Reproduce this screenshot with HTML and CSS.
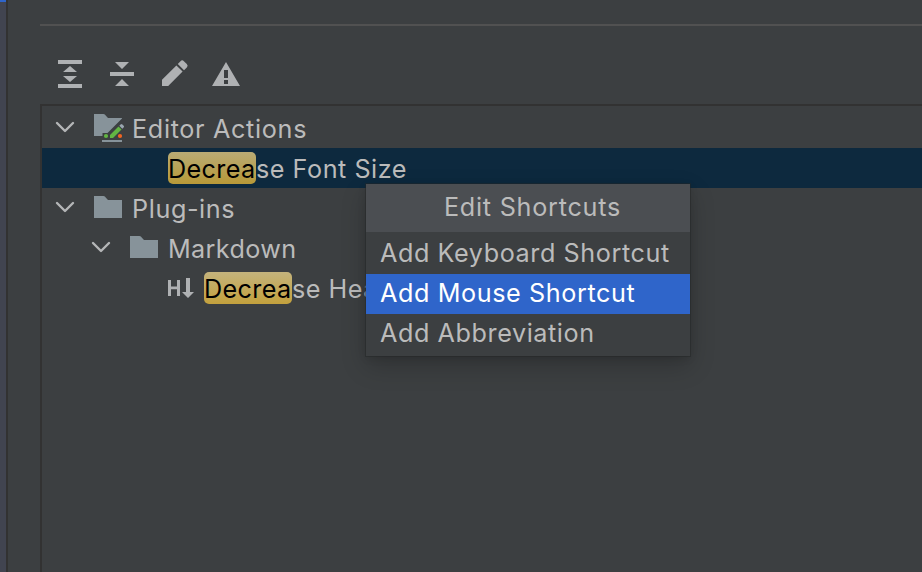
FILE: index.html
```html
<!DOCTYPE html>
<html lang="en">
<head>
<meta charset="utf-8">
<title>Keymap</title>
<link rel="stylesheet" href="styles.css">
</head>
<body>
<div class="window">
  <aside class="sidebar"><div class="sidebar-selection"></div></aside>
  <main class="content">
    <hr class="separator">
    <div class="toolbar">
      <svg class="tool" viewBox="0 0 32 32"><path d="M4 2h24v4H4zM4 26h24v4H4zM16 8l7 6H9zM9 18h14l-7 6z"/></svg>
      <svg class="tool" viewBox="0 0 32 32"><path d="M4 14h24v4H4zM9 4h14l-7 7zM16 21l7 7H9z"/></svg>
      <svg class="tool" viewBox="0 0 32 32"><path d="M4 28v-6.2L18.4 7.4l6.2 6.2L10.2 28zM19.8 6l2.7-2.8q1.7-1.7 3.4 0l2.9 2.9q1.7 1.7 0 3.4L26 12.2z"/></svg>
      <svg class="tool" viewBox="0 0 32 32"><path fill-rule="evenodd" d="M16 4l14 24H2zM14 12v8h4v-8zM14 22v4h4v-4z"/></svg>
    </div>
    <div class="tree">
      <div class="row">
        <svg class="chevron" viewBox="0 0 20 12"><path d="M2 2l8 8 8-8"/></svg>
        <svg class="node-icon" viewBox="0 0 32 32"><path class="folder" d="M2 4h9.5q1.5.2 2.6 2L16 8h14v.5L15.5 23h-5v3H2z"/><path class="folder" d="M10 30h20v2H10z"/><path class="green" d="M18 28v-3l8.5-8.5 3 3L21 28z"/><path class="eraser" d="M27.3 15.7l1.4-1.3q.8-.7 1.6 0l1.4 1.3q.7.8 0 1.6l-1.4 1.4z"/><circle class="green" cx="14" cy="26" r="2.1"/><circle class="orange" cx="28" cy="26" r="2.1"/></svg>
        <span class="label l-editor">Editor Actions</span>
      </div>
      <div class="row selected leaf-one">
        <span class="label"><mark>Decrea</mark><span class="l-font">se Font Size</span></span>
      </div>
      <div class="row">
        <svg class="chevron" viewBox="0 0 20 12"><path d="M2 2l8 8 8-8"/></svg>
        <svg class="node-icon" viewBox="0 0 32 32"><path class="folder" d="M2 6h9.5q1.5.2 2.6 2L16 10h14v18H2z"/></svg>
        <span class="label l-plug">Plug-ins</span>
      </div>
      <div class="row level-two">
        <svg class="chevron" viewBox="0 0 20 12"><path d="M2 2l8 8 8-8"/></svg>
        <svg class="node-icon" viewBox="0 0 32 32"><path class="folder" d="M2 6h9.5q1.5.2 2.6 2L16 10h14v18H2z"/></svg>
        <span class="label l-mark">Markdown</span>
      </div>
      <div class="row leaf-two">
        <svg class="node-icon heading" viewBox="0 0 32 32"><path d="M4 8h3v6.4h6V8h3v16h-3v-6.8H7V24H4zM22 6h4v14h4l-6 6-6-6h4z"/></svg>
        <span class="label"><mark>Decrea</mark><span class="l-font">se Hea</span></span>
      </div>
    </div>
  </main>
  <div class="popup">
    <div class="popup-title"><span class="l-title">Edit Shortcuts</span></div>
    <div class="popup-list">
      <div class="item"><span class="l-key">Add Keyboard Shortcut</span></div>
      <div class="item active"><span class="l-mouse">Add Mouse Shortcut</span></div>
      <div class="item"><span class="l-abbr">Add Abbreviation</span></div>
    </div>
  </div>
</div>
</body>
</html>
```
FILE: styles.css
```css
* { box-sizing: border-box; }
body {
  margin: 0;
  background: #3c3f41;
  color: #bbbbbb;
  font: 25.2px/40px Inter, sans-serif;
  letter-spacing: .35px;
  overflow: hidden;
}
.window { position: relative; display: flex; width: 922px; height: 572px; }
.sidebar { width: 8px; background: #414450; border-right: 2px solid #323232; }
.sidebar-selection { height: 2px; background: #2f65ca; }
.content { flex: 1; display: flex; flex-direction: column; padding: 24px 0 0 32px; min-width: 0; }
.separator { width: 100%; height: 2px; margin: 0; border: 0; background: #515151; }
.toolbar { display: flex; gap: 20px; padding: 32px 0 14px 14px; }
.tool { width: 32px; height: 32px; fill: #afb1b3; }
.tree { flex: 1; border: solid #323232; border-width: 2px 0 0 2px; padding-top: 2px; }
.row { display: flex; height: 40px; padding-left: 13px; white-space: nowrap; }
.row.level-two { padding-left: 49px; }
.row.leaf-one { padding-left: 126px; }
.row.leaf-two { padding-left: 122px; }
.selected { background: #0d293e; }
.chevron { width: 20px; height: 12px; margin: 12.7px 17px 0 0; fill: none; stroke: #b4b6b7; stroke-width: 2.4; stroke-linecap: round; stroke-linejoin: round; }
.node-icon { width: 32px; height: 32px; margin: 2px 8px 0 0; }
.node-icon.heading { margin: 4px 8px 0 0; fill: #afb1b3; }
.folder { fill: #87939a; }
.green { fill: #62b543; }
.orange { fill: #f26522; }
.eraser { fill: #9aa7b0; }
.label { display: flex; line-height: 42px; }
.l-editor { letter-spacing: .67px; }
.l-font { letter-spacing: .52px; }
.l-plug { letter-spacing: .6px; }
.l-title { letter-spacing: .75px; }
.l-key { letter-spacing: .57px; }
.l-mouse { letter-spacing: .59px; }
.l-abbr { letter-spacing: .57px; }
mark {
  width: 88px; height: 32px; margin-top: 4px; line-height: 34px;
  border-radius: 5px; color: #000; background: linear-gradient(#c4b37c, #c3a13d);
}
.selected mark { background: linear-gradient(#b9ab75, #b79938); }
.popup {
  position: absolute; left: 366px; top: 184px; width: 324px; height: 172px;
  background: #3c3f41; white-space: nowrap;
  box-shadow: 0 0 0 1px rgba(35,37,38,.45), 0 10px 24px rgba(0,0,0,.2), 0 2px 8px rgba(0,0,0,.12);
}
.popup-title { height: 48px; line-height: 46px; text-align: center; padding-left: 9px; background: #4b4e52; }
.popup-list { padding: 2px 0; }
.item { height: 40px; line-height: 38px; padding-left: 14px; }
.item.active { background: #2f65ca; color: #fff; }
```
